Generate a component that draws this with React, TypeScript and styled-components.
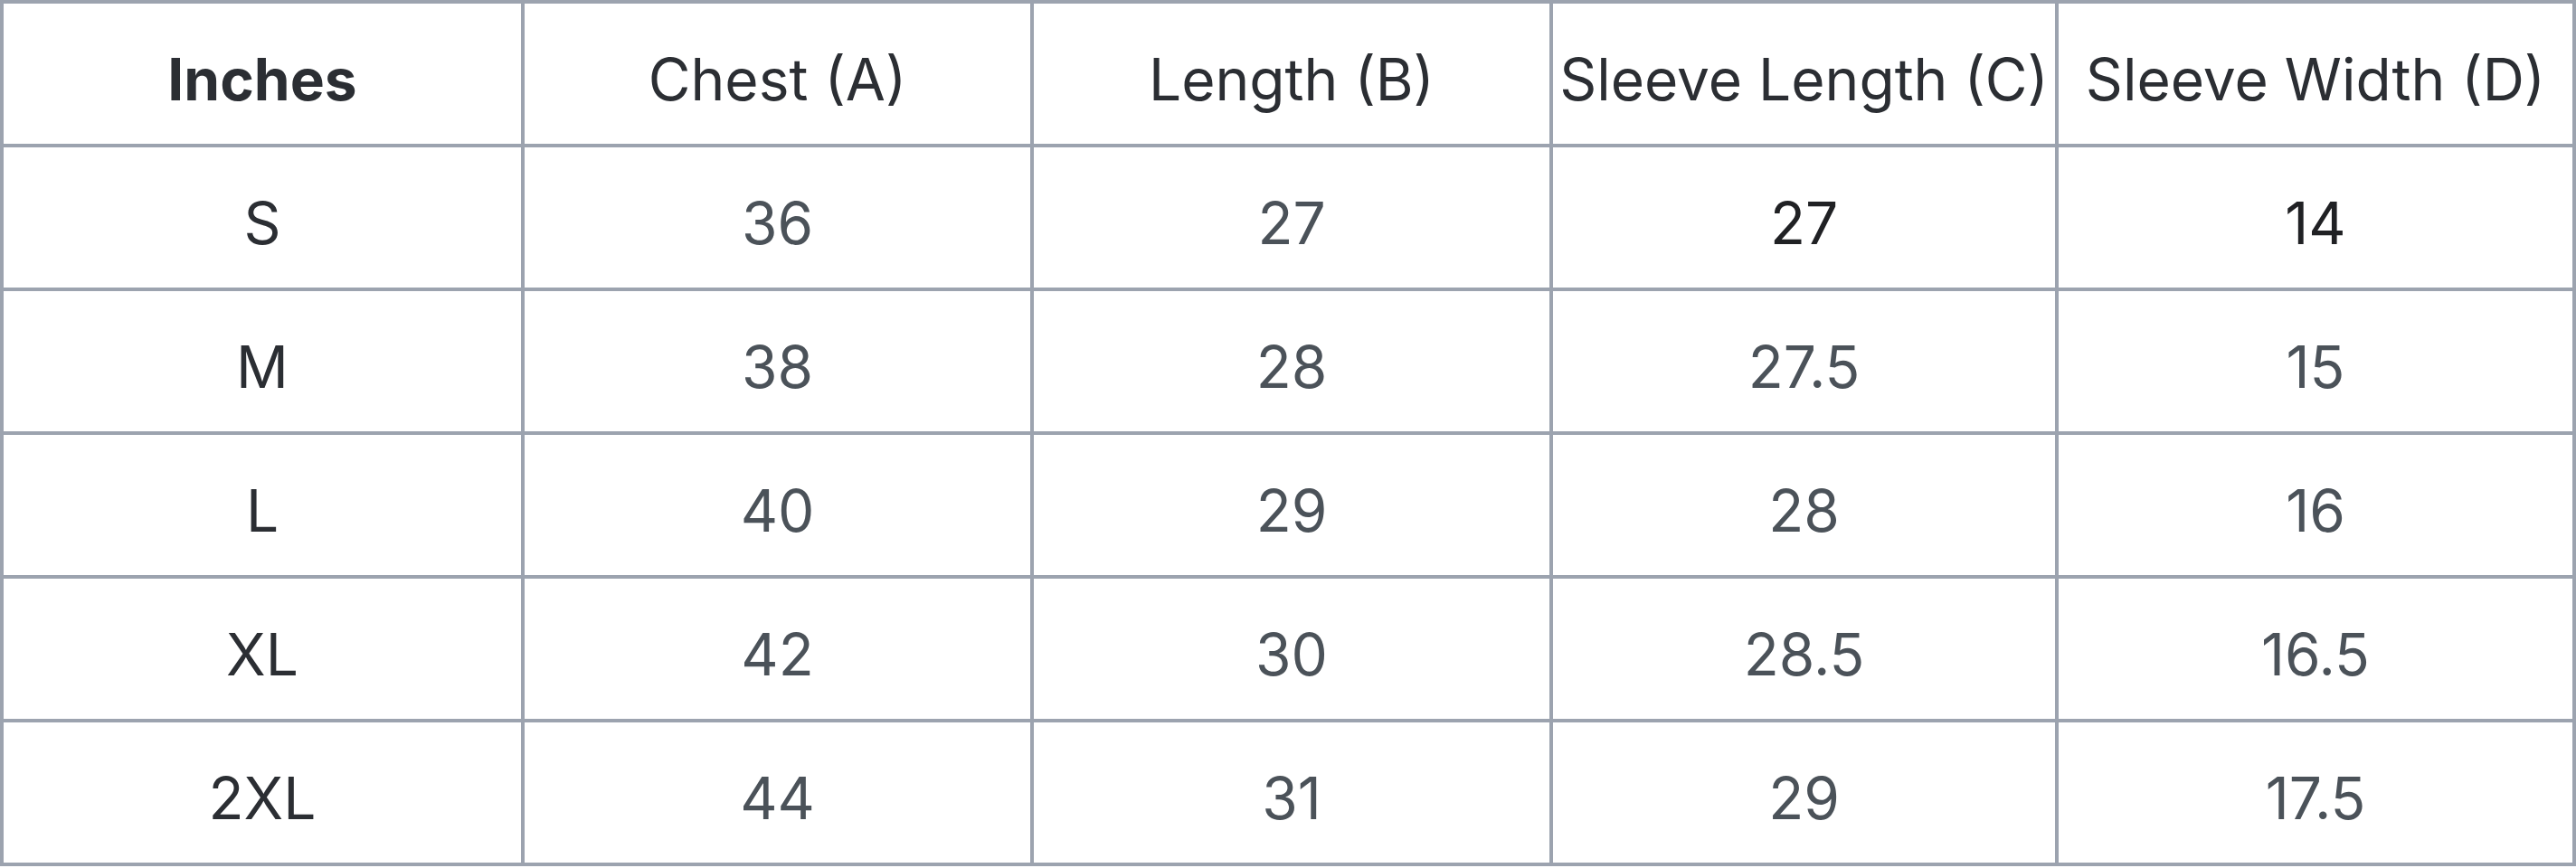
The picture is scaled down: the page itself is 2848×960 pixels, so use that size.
import React from "react";
import styled, { createGlobalStyle } from "styled-components";

const GlobalStyle = createGlobalStyle`
  html, body {
    margin: 0;
    padding: 0;
    background: #ffffff;
  }
  body {
    font-family: Inter, "Noto Sans", Arial, sans-serif;
  }
`;

type Row = {
  size: string;
  values: string[];
};

const headings = ["Chest (A)", "Length (B)", "Sleeve Length (C)", "Sleeve Width (D)"];

const rows: Row[] = [
  { size: "S", values: ["36", "27", "27", "14"] },
  { size: "M", values: ["38", "28", "27.5", "15"] },
  { size: "L", values: ["40", "29", "28", "16"] },
  { size: "XL", values: ["42", "30", "28.5", "16.5"] },
  { size: "2XL", values: ["44", "31", "29", "17.5"] },
];

const columnWidths = [576, 563, 574, 559, 572];

const SizeChart: React.FC = () => {
  return (
    <Table>
      <colgroup>
        {columnWidths.map((w, i) => (
          <col key={i} style={{ width: w }} />
        ))}
      </colgroup>
      <thead>
        <tr>
          <HeadCell $bold>Inches</HeadCell>
          {headings.map((h) => (
            <HeadCell key={h}>{h}</HeadCell>
          ))}
        </tr>
      </thead>
      <tbody>
        {rows.map((row, r) => (
          <tr key={row.size}>
            <SizeCell>{row.size}</SizeCell>
            {row.values.map((v, i) => (
              // the first row's sleeve values are printed darker in the source
              <ValueCell key={i} $dark={r === 0 && i >= 2}>
                {v}
              </ValueCell>
            ))}
          </tr>
        ))}
      </tbody>
    </Table>
  );
};

const Table = styled.table`
  width: 100%;
  table-layout: fixed;
  border-collapse: collapse;
  font-family: Inter, "Noto Sans", Arial, sans-serif;
  font-size: 64px;
  border: 4px solid #9ca3af;
`;

const Cell = styled.td`
  height: 141px;
  padding: 14px 0 0;
  border: 4px solid #9ca3af;
  text-align: center;
  vertical-align: middle;
  white-space: nowrap;
  line-height: 1.2;
`;

const HeadCell = styled(Cell).attrs({ as: "th" })<{ $bold?: boolean }>`
  font-weight: ${(p) => (p.$bold ? 700 : 400)};
  color: #2b2e33;
`;

const SizeCell = styled(Cell)`
  color: #2b2e33;
`;

const ValueCell = styled(Cell)<{ $dark?: boolean }>`
  color: ${(p) => (p.$dark ? "#202124" : "#4b5259")};
`;

const App: React.FC = () => (
  <>
    <GlobalStyle />
    <SizeChart />
  </>
);

export default App;
